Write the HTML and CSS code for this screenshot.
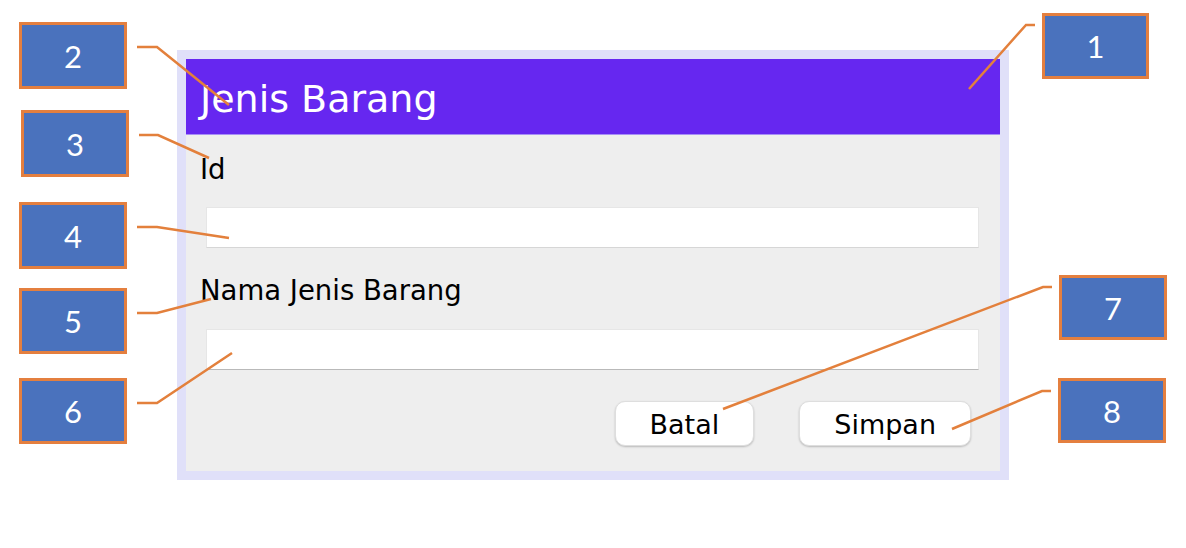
FILE: index.html
```html
<!DOCTYPE html>
<html lang="id">
<head>
    <meta charset="UTF-8">
    <meta name="viewport" content="width=device-width, initial-scale=1.0">
    <title>Jenis Barang</title>
    <link rel="stylesheet" href="styles.css">
</head>
<body>

    <div class="dialog">
        <div class="dialog-header">Jenis Barang</div>
        <div class="dialog-body">
            <label class="field-label" for="idBarang">Id</label>
            <input class="field field-first" type="text" id="idBarang">
            <label class="field-label label-second" for="namaJenis">Nama Jenis Barang</label>
            <input class="field field-second" type="text" id="namaJenis">
            <div class="actions">
                <button class="btn">Batal</button>
                <button class="btn">Simpan</button>
            </div>
        </div>
    </div>

    <!-- callout annotations -->
    <div class="callout c1">1</div>
    <div class="callout c2">2</div>
    <div class="callout c3">3</div>
    <div class="callout c4">4</div>
    <div class="callout c5">5</div>
    <div class="callout c6">6</div>
    <div class="callout c7">7</div>
    <div class="callout c8">8</div>

    <svg class="leaders" width="1186" height="548" viewBox="0 0 1186 548">
        <polyline points="1035,25 1026,25 969,89" />
        <polyline points="137,47 157,47 229,105" />
        <polyline points="139,135 158,135 209,158" />
        <polyline points="137,227 157,227 229,238" />
        <polyline points="137,313 157,313 211,299" />
        <polyline points="137,403 157,403 232,353" />
        <polyline points="1052,287 1043,287 723,409" />
        <polyline points="1051,391 1042,391 952,429" />
    </svg>

</body>
</html>
```

FILE: styles.css
```css
body {
    margin: 0;
    background: #ffffff;
    font-family: "DejaVu Sans", sans-serif;
}
.dialog {
    width: 814px;
    height: 412px;
    margin: 50px 0 0 177px;
    padding: 9px;
    background-color: #e0e0f9;
    display: flex;
    flex-direction: column;
}
.dialog-header {
    height: 76px;
    box-sizing: border-box;
    padding: 4px 0 0 14px;
    line-height: 72px;
    font-size: 38px;
    color: #ffffff;
    background-color: #6627f0;
    border-bottom: 1px solid #a78ef5;
}
.dialog-body {
    flex: 1;
    display: flex;
    flex-direction: column;
    padding: 18px 21px 0 14px;
    background-color: #eeeeee;
}
.field-label {
    font-size: 27.5px;
    line-height: 32px;
    color: #000000;
}
.label-second {
    margin-top: 26px;
}
.field {
    height: 41px;
    box-sizing: border-box;
    margin-left: 6px;
    border: 1px solid #e6e6e6;
    background: #ffffff;
    outline: none;
}
.field-first {
    margin-top: 22px;
    border-bottom: 1px solid #d6d6d6;
}
.field-second {
    margin-top: 23px;
    border-bottom: 1px solid #b9b9b9;
}
.actions {
    display: flex;
    justify-content: flex-end;
    gap: 45px;
    margin-top: 31px;
    padding-right: 8px;
}
.btn {
    height: 45px;
    padding: 0 34px;
    font-family: "DejaVu Sans", sans-serif;
    font-size: 27px;
    line-height: 45px;
    color: #000000;
    background: #ffffff;
    border: 1px solid #dedede;
    border-radius: 10px;
    box-shadow: 0 1px 2px rgba(0, 0, 0, 0.22);
}
.callout {
    position: absolute;
    width: 108px;
    height: 67px;
    box-sizing: border-box;
    display: flex;
    align-items: center;
    justify-content: center;
    background-color: #4a72bd;
    border: 3px solid #e47f3f;
    color: #ffffff;
    font-family: Lato, sans-serif;
    font-size: 31px;
}
.c1 { left: 1042px; top: 13px; width: 107px; height: 66px; }
.c2 { left: 19px; top: 22px; }
.c3 { left: 21px; top: 110px; }
.c4 { left: 19px; top: 202px; }
.c5 { left: 19px; top: 288px; height: 66px; }
.c6 { left: 19px; top: 378px; height: 66px; }
.c7 { left: 1059px; top: 275px; height: 65px; }
.c8 { left: 1058px; top: 378px; height: 65px; }
.leaders {
    position: absolute;
    top: 0;
    left: 0;
    pointer-events: none;
}
.leaders polyline {
    fill: none;
    stroke: #e3803c;
    stroke-width: 2.5;
}
```
